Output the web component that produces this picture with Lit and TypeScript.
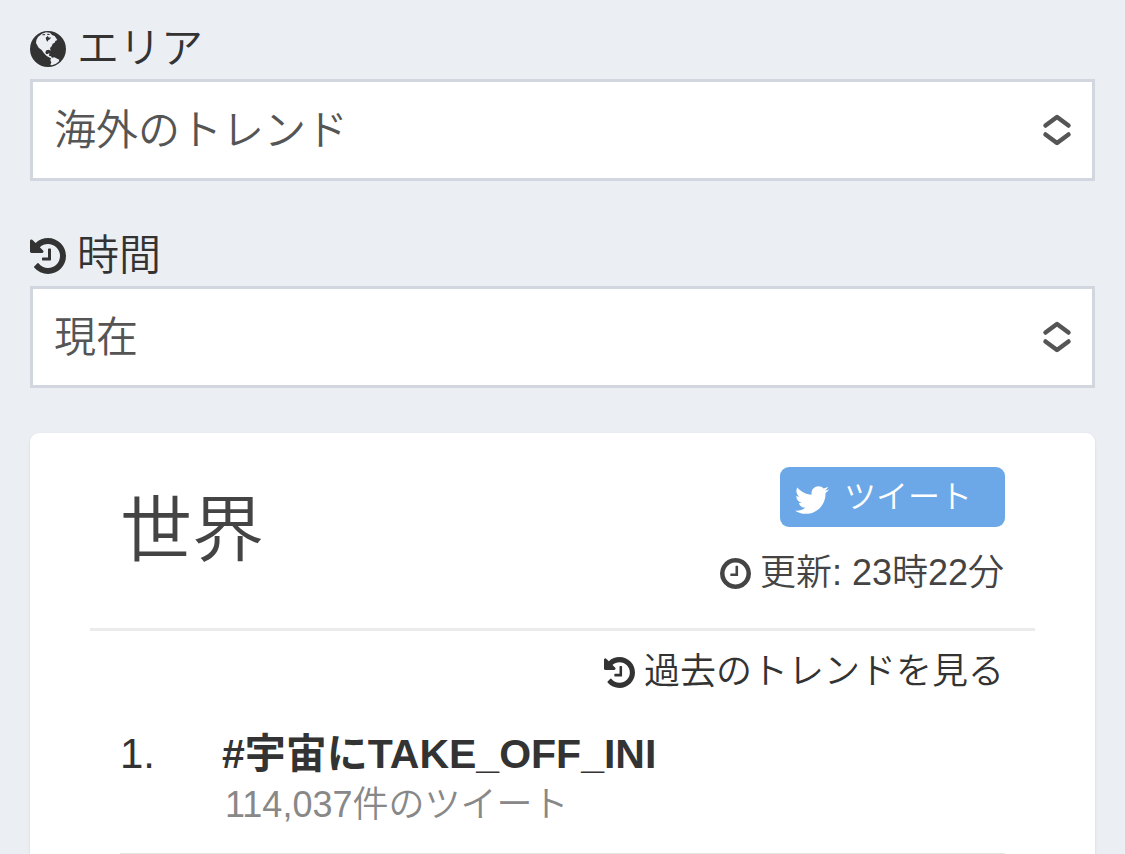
import { LitElement, html, css, svg } from "lit";
import { customElement, property, state } from "lit/decorators.js";

interface Glyph {
  box: string;
  path: string;
}

const HISTORY: Glyph = {
  box: "128 128 1536 1536",
  path: "M1664 896q0 156-61 298t-164 245-245 164-298 61q-172 0-327-72.500t-264-204.500q-7-10-6.500-22.500t8.500-20.500l137-138q10-9 25-9 16 2 23 12 73 95 179 147t225 52q104 0 198.500-40.500t163.500-109.500 109.500-163.500 40.500-198.500-40.500-198.500-109.500-163.500-163.500-109.500-198.500-40.500q-98 0-188 35.500t-160 101.500l137 138q31 30 14 69-17 40-59 40h-448q-26 0-45-19t-19-45v-448q0-42 40-59 39-17 69 14l130 129q107-101 244.500-156.500t284.500-55.500q156 0 298 61t245 164 164 245 61 298zm-640-288v448q0 14-9 23t-23 9h-320q-14 0-23-9t-9-23v-64q0-14 9-23t23-9h224v-352q0-14 9-23t23-9h64q14 0 23 9t9 23z",
};

const CLOCK: Glyph = {
  box: "128 128 1536 1536",
  path: "M1024 544v448q0 14-9 23t-23 9h-320q-14 0-23-9t-9-23v-64q0-14 9-23t23-9h224v-352q0-14 9-23t23-9h64q14 0 23 9t9 23zm416 352q0-148-73-273t-198-198-273-73-273 73-198 198-73 273 73 273 198 198 273 73 273-73 198-198 73-273zm224 0q0 209-103 385.500t-279.500 279.500-385.500 103-385.500-103-279.500-279.500-103-385.500 103-385.500 279.500-279.500 385.500-103 385.500 103 279.500 279.500 103 385.500z",
};

// Disc, then North America, Hudson Bay, the Arctic gaps and South America cut by even-odd fill.
const GLOBE: Glyph = {
  box: "0 0 108 108",
  path:
    "M54 0a54 54 0 1 1 0 108a54 54 0 1 1 0-108z" +
    "M18 36Q18 26 24 18L36 8L48 4L60 5L66 12L74 15L82 27L76 30L74 35L68 38L65 46L60 51L62 59L57 56L49 58L46 64L48 69L53 69L58 66L57 74L63 76L66 80L61 81L50 75L42 67L35 57L26 50Z" +
    "M47 20L53 15L57 20L63 19L60 25L55 27L53 32L49 28Z" +
    "M38 10L46 9L44 13L37 13Z" +
    "M52 8L60 9L57 12L51 11Z" +
    "M63 81L73 79L79 82L88 86L86 92L78 98L66 103L61 102L64 94L61 88Z",
};

const BIRD: Glyph = {
  box: "0 0 24 24",
  path: "M23.954 4.569c-.885.389-1.83.654-2.825.775 1.014-.611 1.794-1.574 2.163-2.723-.951.555-2.005.959-3.127 1.184-.896-.959-2.173-1.559-3.591-1.559-2.717 0-4.92 2.203-4.92 4.917 0 .39.045.765.127 1.124C7.691 8.094 4.066 6.13 1.64 3.161c-.427.722-.666 1.561-.666 2.475 0 1.71.87 3.213 2.188 4.096-.807-.026-1.566-.248-2.228-.616v.061c0 2.385 1.693 4.374 3.946 4.827-.413.111-.849.171-1.296.171-.314 0-.615-.03-.916-.086.631 1.953 2.445 3.377 4.604 3.417-1.68 1.319-3.809 2.105-6.102 2.105-.39 0-.779-.023-1.17-.067 2.189 1.394 4.768 2.209 7.557 2.209 9.054 0 13.999-7.496 13.999-13.986 0-.209 0-.42-.015-.63.961-.689 1.8-1.56 2.46-2.548l-.047-.02z",
};

const glyph = (g: Glyph, cls = "icon") =>
  html`<svg class=${cls} viewBox=${g.box} aria-hidden="true">
    ${svg`<path d=${g.path} fill="currentColor" fill-rule=${g === GLOBE ? "evenodd" : "nonzero"}></path>`}
  </svg>`;

interface Trend {
  name: string;
  count: string;
}

@customElement("trend-select")
class TrendSelect extends LitElement {
  @property() label = "";
  @property({ attribute: false }) icon: Glyph = GLOBE;
  @property({ attribute: false }) options: string[] = [];

  static styles = css`
    :host {
      display: block;
    }
    .label {
      display: flex;
      align-items: center;
      gap: 11px;
      height: 60px;
      font-size: 42px;
      line-height: 60px;
      color: #333;
    }
    .icon {
      width: 36px;
      height: 36px;
      flex: none;
    }
    .box {
      position: relative;
    }
    .select {
      display: block;
      box-sizing: border-box;
      width: 100%;
      height: 102px;
      margin: 0;
      padding: 0 66px 0 21px;
      border: 3px solid #d2d6de;
      border-radius: 0;
      background: #fff;
      color: #555;
      font: inherit;
      font-size: 42px;
      appearance: none;
    }
    .arrows {
      position: absolute;
      top: 34px;
      right: 23px;
      width: 30px;
      height: 34px;
      pointer-events: none;
    }
  `;

  render() {
    return html`
      <label class="label" for="choice">${glyph(this.icon)}<span>${this.label}</span></label>
      <div class="box">
        <select class="select" id="choice">
          ${this.options.map((o) => html`<option>${o}</option>`)}
        </select>
        <svg class="arrows" viewBox="0 0 30 34" aria-hidden="true">
          <path
            d="M3.500 12.500 15 4l11.500 8.500M3.500 21.500 15 30l11.500-8.500"
            fill="none"
            stroke="#555"
            stroke-width="4.500"
            stroke-linecap="round"
            stroke-linejoin="round"
          ></path>
        </svg>
      </div>
    `;
  }
}

@customElement("app-root")
class AppRoot extends LitElement {
  @state() private trends: Trend[] = [{ name: "#宇宙にTAKE_OFF_INI", count: "114,037件のツイート" }];

  static styles = css`
    :host {
      display: flex;
      flex-direction: column;
      gap: 45px;
      box-sizing: border-box;
      min-height: 100vh;
      padding: 19px 30px 0;
      background: #ebeff4;
      color: #333;
      font-family: "Liberation Sans", "Noto Sans CJK JP", sans-serif;
      font-weight: 350;
    }
    .card {
      flex: 1;
      padding: 0 60px;
      border-radius: 9px 9px 0 0;
      background: #fff;
      box-shadow: 0 1px 3px rgba(0, 0, 0, 0.1);
    }
    .head {
      display: flex;
      justify-content: space-between;
      padding: 34px 30px 31px;
      border-bottom: 3px solid #ebebeb;
      color: #444;
    }
    .title {
      margin: 0;
      padding-top: 12px;
      font-size: 72px;
      font-weight: 350;
      line-height: 102px;
    }
    .side {
      display: flex;
      flex-direction: column;
      align-items: flex-end;
      gap: 22px;
    }
    .tweet {
      display: flex;
      align-items: center;
      box-sizing: border-box;
      width: 225px;
      height: 60px;
      padding-left: 15px;
      gap: 15px;
      border-radius: 9px;
      background: #6ca8e8;
      color: #fff;
      font-size: 32px;
      line-height: 60px;
      text-decoration: none;
    }
    .bird {
      width: 34px;
      height: 34px;
      margin-top: 6px;
    }
    .updated,
    .past {
      display: flex;
      align-items: center;
      gap: 9px;
      padding-right: 1px;
      font-size: 36px;
      line-height: 48px;
    }
    .small-icon {
      width: 31px;
      height: 31px;
      flex: none;
    }
    .past-row {
      display: flex;
      justify-content: flex-end;
      padding: 17px 30px 25px;
    }
    .past {
      color: #333;
      text-decoration: none;
    }
    .list {
      margin: 0;
      padding: 0 30px;
      list-style: none;
    }
    .item {
      display: grid;
      grid-template-columns: 102px 1fr;
      padding: 6px 0 24px;
      border-bottom: 1px solid #e4e4e4;
    }
    .rank {
      font-size: 42px;
      line-height: 54px;
    }
    .name {
      display: block;
      color: #333;
      font-size: 41px;
      font-weight: 700;
      line-height: 54px;
      text-decoration: none;
    }
    .count {
      padding-left: 3px;
      color: #888;
      font-size: 36px;
      line-height: 48px;
    }
  `;

  render() {
    return html`
      <trend-select .label=${"エリア"} .icon=${GLOBE} .options=${["海外のトレンド"]}></trend-select>
      <trend-select .label=${"時間"} .icon=${HISTORY} .options=${["現在"]}></trend-select>
      <section class="card">
        <header class="head">
          <h1 class="title">世界</h1>
          <div class="side">
            <a class="tweet" href="#tweet">${glyph(BIRD, "bird")}<span>ツイート</span></a>
            <div class="updated">${glyph(CLOCK, "small-icon")}<span>更新: 23時22分</span></div>
          </div>
        </header>
        <div class="past-row">
          <a class="past" href="#past">${glyph(HISTORY, "small-icon")}<span>過去のトレンドを見る</span></a>
        </div>
        <ol class="list">
          ${this.trends.map(
            (t, i) => html`
              <li class="item">
                <span class="rank">${i + 1}.</span>
                <div>
                  <a class="name" href="#trend">${t.name}</a>
                  <div class="count">${t.count}</div>
                </div>
              </li>
            `
          )}
        </ol>
      </section>
    `;
  }
}
